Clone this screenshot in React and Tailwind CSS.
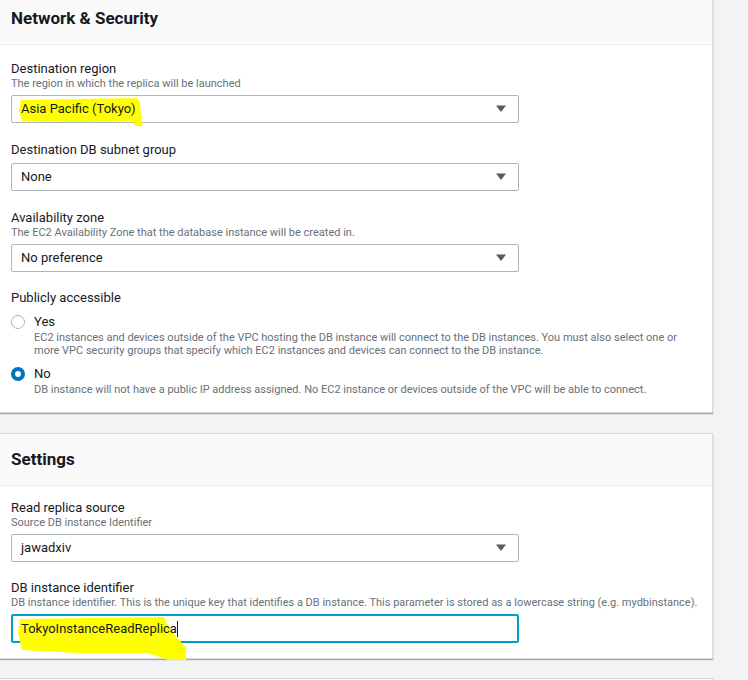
import React from 'react'

const font = { fontFamily: 'Roboto, "Liberation Sans", Arial, sans-serif' }

function Caret() {
  return (
    <svg width="12" height="8" viewBox="0 0 12 8" className="shrink-0">
      <path d="M1 0.5h10L6 7z" fill="#545b64" />
    </svg>
  )
}

function Highlight({ className, d, vb }) {
  return (
    <svg className={'absolute pointer-events-none ' + className} viewBox={vb} preserveAspectRatio="none">
      <path d={d} fill="#ffff00" />
    </svg>
  )
}

function Select({ value, highlight }) {
  return (
    <div className="relative flex items-center justify-between w-[508px] h-[28px] border border-[#aab7b8] rounded-[2px] bg-white pl-[9px] pr-[11px]">
      {highlight && (
        <Highlight
          className="left-[7px] top-[1px] w-[124px] h-[29px]"
          vb="0 0 124 29"
          d="M2 3 L 118 1 L 121 6 L 122 20 L 124 29 L 116 29 L 114 24 L 60 25 L 3 24 L 0 14 Z"
        />
      )}
      <span className="relative text-[13px] text-[#16191f]">{value}</span>
      <Caret />
    </div>
  )
}

function Field({ label, desc, children, className = '' }) {
  return (
    <div className={className}>
      <div className="text-[13px] leading-[17px] text-[#16191f]">{label}</div>
      {desc && <div className="text-[11px] leading-[14px] text-[#687078]">{desc}</div>}
      <div className={desc ? 'mt-[4px]' : 'mt-[5px]'}>{children}</div>
    </div>
  )
}

function Radio({ checked, label, children, className = '' }) {
  return (
    <div className={'flex gap-[9px] ' + className}>
      <div className="pt-[1px]">
        {checked ? (
          <div className="w-[14px] h-[14px] rounded-full bg-[#0073bb] flex items-center justify-center">
            <div className="w-[6px] h-[6px] rounded-full bg-white" />
          </div>
        ) : (
          <div className="w-[14px] h-[14px] rounded-full border border-[#aab7b8] bg-white" />
        )}
      </div>
      <div>
        <div className="text-[13px] leading-[16px] text-[#16191f]">{label}</div>
        <div className="text-[11px] leading-[13px] text-[#687078] mt-[1px] w-[645px]">{children}</div>
      </div>
    </div>
  )
}

function Card({ title, children, className = '' }) {
  return (
    <div className={'w-[714px] -ml-px bg-white border border-[#d5dbdb] shadow-[0_1px_1px_0_rgba(0,28,36,0.35)] ' + className}>
      <div className="h-[52px] bg-[#fafafa] border-b border-[#eaeded] flex items-center px-[11px]">
        <h2 className="text-[17px] font-bold text-[#16191f]">{title}</h2>
      </div>
      {children}
    </div>
  )
}

export default function App() {
  return (
    <div className="w-[748px] h-[680px] overflow-hidden bg-[#f2f3f3]" style={font}>
      <Card title="Network & Security" className="-mt-[8px]">
        <div className="px-[11px] pt-[15px] pb-[16px]">
          <Field label="Destination region" desc="The region in which the replica will be launched">
            <Select value="Asia Pacific (Tokyo)" highlight />
          </Field>
          <Field label="Destination DB subnet group" className="mt-[18px]">
            <Select value="None" />
          </Field>
          <Field
            label="Availability zone"
            desc="The EC2 Availability Zone that the database instance will be created in."
            className="mt-[18px]"
          >
            <Select value="No preference" />
          </Field>
          <div className="mt-[17px]">
            <div className="text-[13px] leading-[17px] text-[#16191f]">Publicly accessible</div>
            <Radio label="Yes" className="mt-[8px]">
              EC2 instances and devices outside of the VPC hosting the DB instance will connect to the DB instances. You must also select one or more VPC security groups that specify which EC2 instances and devices can connect to the DB instance.
            </Radio>
            <Radio checked label="No" className="mt-[9px]">
              DB instance will not have a public IP address assigned. No EC2 instance or devices outside of the VPC will be able to connect.
            </Radio>
          </div>
        </div>
      </Card>

      <Card title="Settings" className="mt-[20px]">
        <div className="px-[11px] pt-[13px] pb-[15px]">
          <Field label="Read replica source" desc="Source DB instance Identifier">
            <Select value="jawadxiv" />
          </Field>
          <Field
            label="DB instance identifier"
            desc="DB instance identifier. This is the unique key that identifies a DB instance. This parameter is stored as a lowercase string (e.g. mydbinstance)."
            className="mt-[17px]"
          >
            <div className="relative flex items-center w-[508px] h-[29px] border-2 border-[#00a1c9] rounded-[2px] bg-white pl-[8px]">
              <Highlight
                className="left-[5px] top-[1px] w-[168px] h-[43px]"
                vb="0 0 168 43"
                d="M2 2 L 146 0 L 150 8 L 160 22 L 168 30 L 168 43 L 150 43 L 130 36 L 60 36 L 4 33 L 0 16 Z"
              />
              <span className="relative text-[13px] text-[#16191f]">TokyoInstanceReadReplica</span>
              <span className="relative w-px h-[16px] bg-[#16191f]" />
            </div>
          </Field>
        </div>
      </Card>

      <div className="w-[714px] -ml-px mt-[19px] h-[20px] bg-white border border-[#d5dbdb]" />
    </div>
  )
}
